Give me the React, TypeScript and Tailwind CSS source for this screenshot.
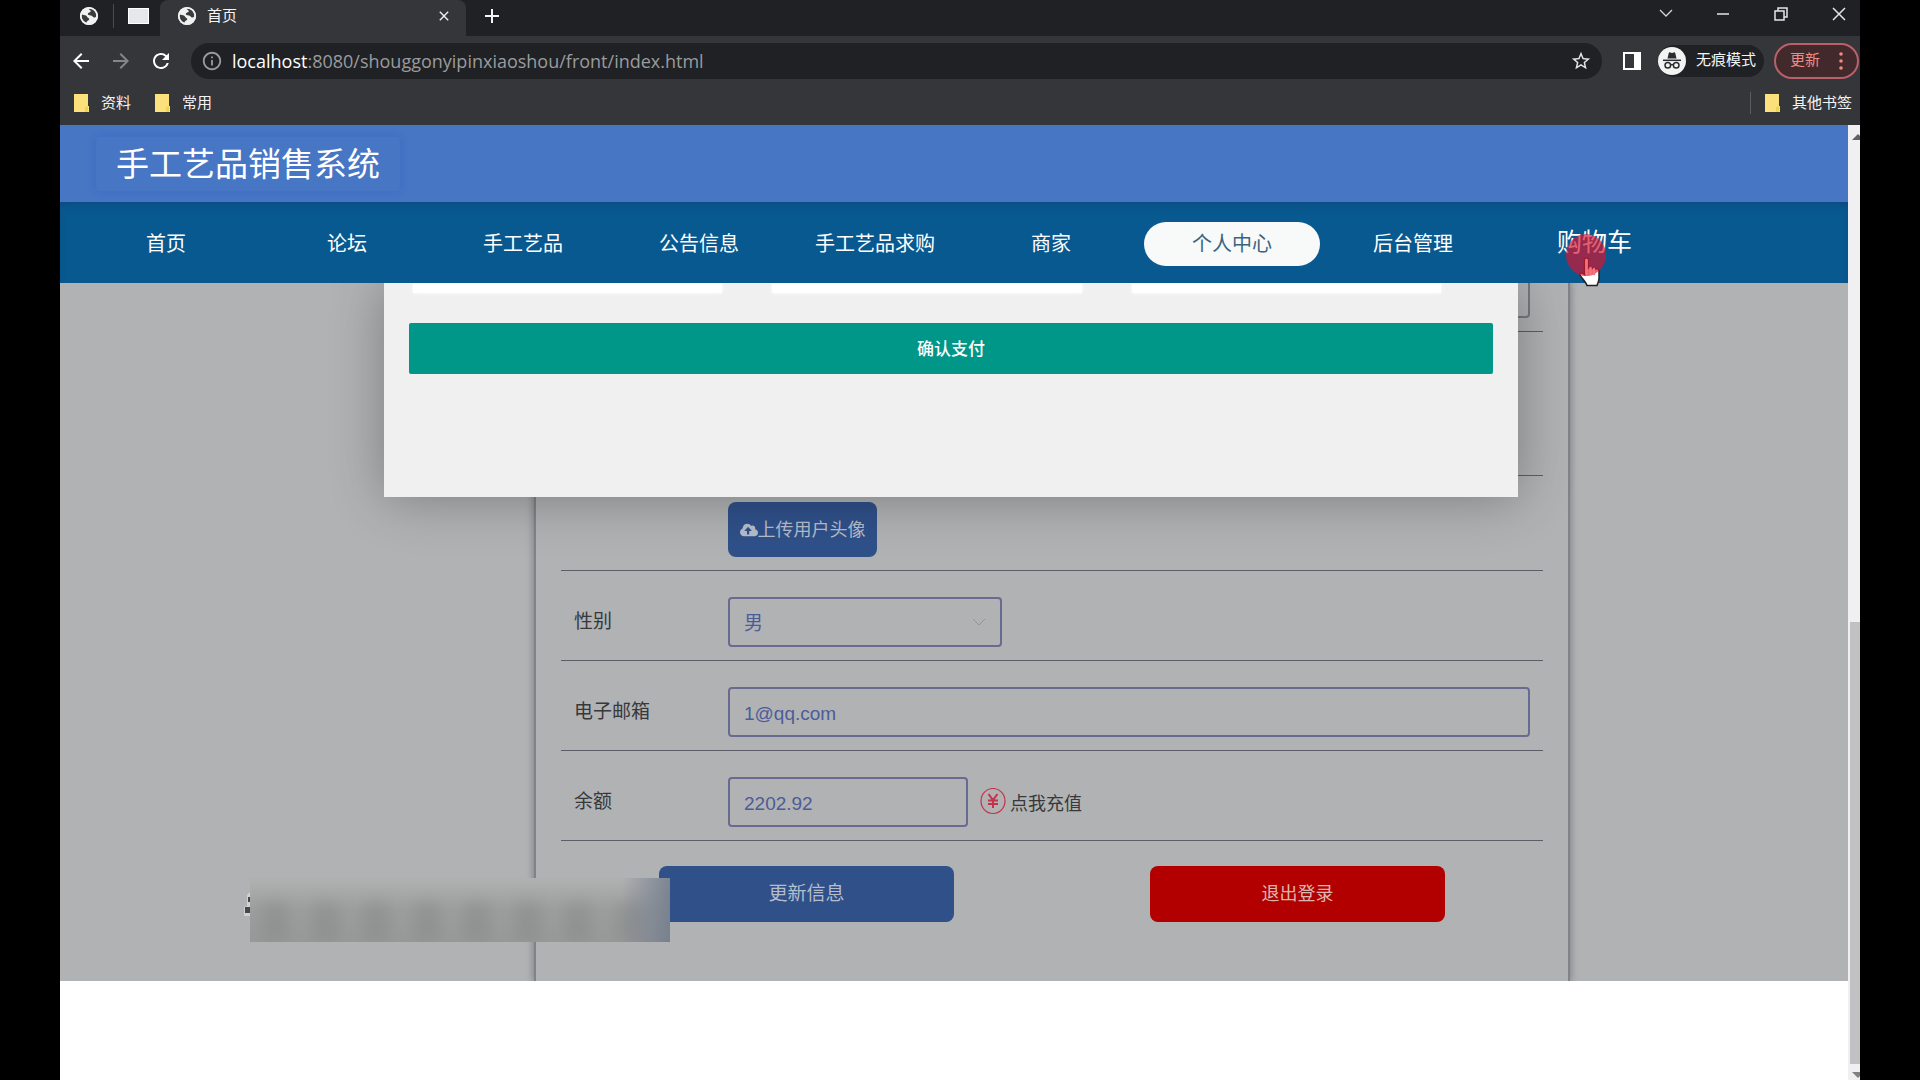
import React, { useState } from 'react';
import { MdArrowBack, MdArrowForward, MdRefresh, MdInfoOutline, MdStarBorder, MdAdd, MdClose } from 'react-icons/md';
import { FaCloudUploadAlt } from 'react-icons/fa';

interface NavItem {
    label: string;
    className?: string;
}

const navItems: NavItem[] = [
    { label: '首页', className: 'mr-[5px]' },
    { label: '论坛' },
    { label: '手工艺品' },
    { label: '公告信息' },
    { label: '手工艺品求购' },
    { label: '商家' },
    { label: '个人中心', className: 'mx-[5px] bg-[#f8fafa] text-[#3b6480]' },
    { label: '后台管理' },
];

const GlobeIcon: React.FC = () => (
    <svg viewBox="0 0 20 20" className="size-5 shrink-0">
        <circle cx="10" cy="10" r="9" fill="#f1f1f1" />
        <path d="M2.500 8c1.200 1.200 3.500.8 4.800 1.800s.7 1.700 2 2.200 1.200 1.500.2 2.200-2 1-2 2.500c-3.500-1.200-5.800-4.700-5-8.700zM9.500 2.500c.3 1.500 2.500 1.300 2.300 2.800s-2.800 1.200-3 2.500 1.500 1.500 3 1.700 1.800 1.300 2.600 1.800 2 .2 3-.8c.3-3.500-1.700-6.500-4.400-7.500-1.200-.5-2.300-.6-3.500-.5z" fill="#3a3b3e" />
        <circle cx="10" cy="10" r="8.200" fill="none" stroke="#f1f1f1" strokeWidth="1.800" />
    </svg>
);

const FolderIcon: React.FC = () => (
    <svg viewBox="0 0 15 18" className="h-[18px] w-[15px] shrink-0">
        <path d="M0 0h14v12h1v6H0z" fill="#fbe07c" />
        <path d="M11 18v-5l3-1v6z" fill="#eed455" />
    </svg>
);

const IncognitoIcon: React.FC = () => (
    <svg viewBox="0 0 28 28" className="size-7 shrink-0">
        <circle cx="14" cy="14" r="14" fill="#f3f3f4" />
        <path d="M9.500 11.500 10.700 6.200c.2-.7.8-1 1.400-.8l1.900.5 1.900-.5c.6-.2 1.200.1 1.400.8l1.200 5.300z" fill="#2b2c2f" />
        <path d="M5 13.300h18" stroke="#2b2c2f" strokeWidth="1.500" />
        <g fill="none" stroke="#2b2c2f" strokeWidth="1.500">
            <circle cx="9.800" cy="18.300" r="2.800" />
            <circle cx="18.200" cy="18.300" r="2.800" />
            <path d="M12.600 18c.9-.7 1.900-.7 2.800 0" />
        </g>
    </svg>
);

const BrowserChrome: React.FC = () => (
    <div className="bg-[#35363a] text-[15px] text-gray-100">
        <div className="flex h-9 bg-[#202124]">
            <div className="flex w-[100px] items-center pb-1 pl-[19px]">
                <GlobeIcon />
                <span className="ml-3.5 h-6 w-px bg-[#4b4c50]" />
                <span className="ml-3.5 h-4 w-[21px] border border-white bg-gray-200" />
            </div>
            <div className="flex w-[306px] items-center rounded-t-lg bg-[#35363a] pr-3.5 pb-1 pl-[17px]">
                <GlobeIcon />
                <span className="ml-2.5 flex-1">首页</span>
                <button aria-label="关闭标签页"><MdClose className="size-4" /></button>
            </div>
            <button className="ml-3.5 pb-1" aria-label="新标签页"><MdAdd className="size-6" /></button>
            <div className="ml-auto flex items-center pr-3.5 pb-2">
                <svg viewBox="0 0 14 14" className="mr-[43px] size-3.5" fill="none" stroke="#d5d5d6" strokeWidth="1.300"><path d="m1 3 6 6 6-6" /></svg>
                <svg viewBox="0 0 14 14" className="mr-[44px] size-3.5" fill="none" stroke="#e5e5e6" strokeWidth="1.500"><path d="M1 7h12" /></svg>
                <svg viewBox="0 0 14 14" className="mr-[44px] size-3.5" fill="none" stroke="#e5e5e6" strokeWidth="1.500"><path d="M1 4h9v9H1zM4 4V1h9v9h-3" /></svg>
                <svg viewBox="0 0 14 14" className="size-3.5" fill="none" stroke="#e5e5e6" strokeWidth="1.500"><path d="m1 1 12 12M13 1 1 13" /></svg>
            </div>
        </div>
        <div className="flex h-[49px] items-center pr-px pl-[9px]">
            <button aria-label="后退"><MdArrowBack className="size-6 text-white" /></button>
            <button className="ml-4" aria-label="前进"><MdArrowForward className="size-6 text-[#85868a]" /></button>
            <button className="ml-4" aria-label="刷新"><MdRefresh className="size-6 text-white" /></button>
            <div className="ml-[18px] flex h-9 flex-1 items-center rounded-full bg-[#202124] pr-2.5 pl-2.5">
                <MdInfoOutline className="size-[22px] text-[#9a9b9e]" />
                <span className="ml-[9px] flex-1 font-['Open_Sans','Noto_Sans',sans-serif] text-lg text-[#9a9b9e]">
                    <span className="text-white">localhost</span>:8080/shouggonyipinxiaoshou/front/index.html
                </span>
                <MdStarBorder className="size-[22px] text-gray-200" />
            </div>
            <span className="ml-[21px] h-[18px] w-[18px] border-2 border-r-[7px] border-white" />
            <div className="ml-[17px] flex h-8 items-center rounded-full bg-[#202124] pr-2">
                <IncognitoIcon />
                <span className="ml-2.5">无痕模式</span>
            </div>
            <button className="ml-2.5 flex h-9 w-[85px] items-center justify-between rounded-full border-2 border-[#b9606a] bg-[#42292c] pr-3.5 pl-3.5 text-[#f08b84]">
                更新
                <svg viewBox="0 0 4 18" className="h-[18px] w-1" fill="#f08b84">
                    <circle cx="2" cy="2" r="1.800" /><circle cx="2" cy="9" r="1.800" /><circle cx="2" cy="16" r="1.800" />
                </svg>
            </button>
        </div>
        <div className="flex h-10 items-center pr-2 pb-1 pl-3.5">
            <FolderIcon />
            <span className="ml-3">资料</span>
            <span className="w-6" />
            <FolderIcon />
            <span className="ml-3">常用</span>
            <span className="mr-3.5 ml-auto h-[22px] w-px bg-[#5c5d61]" />
            <FolderIcon />
            <span className="ml-3">其他书签</span>
        </div>
    </div>
);

const Scrollbar: React.FC = () => (
    <div className="flex w-3 flex-col overflow-hidden bg-[#f0f0f2] pl-0.5">
        <svg viewBox="0 0 12 16" className="h-[18px] w-3"><path d="M2 14 8 8l6 6z" fill="#606164" /></svg>
        <div className="mt-[479px] flex-1 bg-[#c1c1c3]" />
        <svg viewBox="0 0 12 16" className="h-4 w-3"><path d="M2 8h12l-6 6z" fill="#808184" /></svg>
    </div>
);

const PointerCursor: React.FC = () => (
    <svg viewBox="0 0 44 54" className="pointer-events-none absolute top-[9px] left-[7px] h-[54px] w-11">
        <path d="M20.500 26c0-2.800 3.800-2.800 3.800 0v8c1-1 3.200-1 3.700.5 1-1 3-1 3.500.6 1.500-.8 3.500-.3 3.500 2v7c0 3-1 4-2 7.400H23c-1-3.500-5-7-7-10.500-.8-2 1.500-3.200 4.500-.5z" fill="#fff" stroke="#222" strokeWidth="1.500" />
        <ellipse cx="22" cy="21" rx="20" ry="21" fill="#d8152f" fillOpacity=".68" />
        <path d="M22.500 26v14M26.500 34v6M30 35v5" stroke="#f4747c" strokeWidth="2.500" strokeLinecap="round" />
    </svg>
);

const Header: React.FC = () => (
    <header className="relative z-20">
        <div className="flex h-[77px] items-center bg-[#4776c5] pl-9">
            <h1 className="flex h-[54px] items-center rounded-sm px-5 pt-0.5 text-[33px] text-white shadow-[0_0_6px_2px_rgba(50,90,190,0.3)]">手工艺品销售系统</h1>
        </div>
        <nav className="flex h-[81px] items-center bg-[#08598f] pt-0.5 pl-[18px] text-xl text-white shadow-[inset_0_6px_8px_-4px_rgba(20,60,120,0.6)]">
            {navItems.map((item) => (
                <a
                    key={item.label}
                    href="#"
                    className={`flex h-11 w-44 items-center justify-center rounded-full ${item.className ?? ''}`}
                >
                    {item.label}
                </a>
            ))}
            <a href="#" className="relative ml-14 pb-0.5 text-[25px]">
                购物车
                <PointerCursor />
            </a>
        </nav>
    </header>
);

interface FormRowProps {
    label?: string;
    htmlFor?: string;
    children?: React.ReactNode;
}

const FormRow: React.FC<FormRowProps> = ({ label, htmlFor, children }) => (
    <div className="flex items-center border-b border-[#5c5d66] pt-[26px] pr-[13px] pb-[13px] pl-[13px]">
        <label htmlFor={htmlFor} className="w-[154px] shrink-0 text-[19px] text-[#37383b]">{label}</label>
        {children}
    </div>
);

const fieldClass = 'h-[50px] rounded border-2 border-[#696a90] bg-transparent px-3.5 pt-1 text-[19px] text-[#4c5c98] outline-none';

const UserForm: React.FC = () => {
    const [gender, setGender] = useState('男');
    const [email, setEmail] = useState('1@qq.com');
    const [balance, setBalance] = useState('2202.92');

    return (
        <form className="mr-[278px] ml-[474px] border-x-2 border-[#828388] px-[25px] pb-[59px] shadow-[0_0_7px_1px_rgba(70,70,75,0.45)]">
            <div className="flex h-[49px] items-end overflow-hidden border-b border-[#5c5d66] pr-[13px] pb-[13px] pl-[167px]">
                <input aria-label="手机" className="h-[50px] w-full rounded border-2 border-[#78797d]" />
            </div>
            <div className="h-36 border-b border-[#5c5d66]" />
            <FormRow>
                <button type="button" className="flex h-[55px] w-[149px] items-center justify-center rounded-lg bg-[#2f5089] text-lg text-[#b5bdcc]">
                    <FaCloudUploadAlt className="size-[18px]" />上传用户头像
                </button>
            </FormRow>
            <FormRow label="性别" htmlFor="gender">
                <div className="relative">
                    <select id="gender" value={gender} onChange={(e) => setGender(e.target.value)} className={`${fieldClass} w-[274px] appearance-none`}>
                        <option>男</option>
                        <option>女</option>
                    </select>
                    <svg viewBox="0 0 14 8" className="pointer-events-none absolute top-[21px] right-4 h-2 w-3.5" fill="none" stroke="#929398"><path d="m1 1 6 6 6-6" /></svg>
                </div>
            </FormRow>
            <FormRow label="电子邮箱" htmlFor="email">
                <input id="email" value={email} onChange={(e) => setEmail(e.target.value)} className={`${fieldClass} min-w-0 flex-1`} />
            </FormRow>
            <FormRow label="余额" htmlFor="balance">
                <input id="balance" value={balance} onChange={(e) => setBalance(e.target.value)} className={`${fieldClass} w-60`} />
                <button type="button" className="ml-3 flex items-center gap-1 text-lg text-[#37383b]">
                    <svg viewBox="0 0 26 28" className="h-7 w-[26px]" fill="none" stroke="#c8304a">
                        <ellipse cx="13" cy="13" rx="12" ry="12.500" strokeWidth="1.200" />
                        <path d="m8.500 6 4.500 6 4.500-6M13 12v8M8 12.500h10M8 16h10" strokeWidth="2" />
                    </svg>
                    <span className="pt-1">点我充值</span>
                </button>
            </FormRow>
            <div className="grid grid-cols-2 justify-items-center pt-[25px]">
                <button type="button" className="h-14 w-3/5 rounded-lg bg-[#2f5089] text-[19px] text-[#b5bdcc]">更新信息</button>
                <button type="button" className="h-14 w-3/5 rounded-lg bg-[#b20000] text-lg text-[#dcb6ae]">退出登录</button>
            </div>
        </form>
    );
};

const PayDialog: React.FC = () => (
    <div role="dialog" className="absolute top-0 right-[330px] left-[324px] z-10 h-[214px] bg-[#f0f0f1] px-[25px] shadow-[1px_1px_50px_rgba(0,0,0,0.3)]">
        <div className="grid grid-cols-3 gap-[50px] pr-[52px] pl-1">
            <div className="h-2.5 bg-white shadow-[0_0_4px_#fff]" />
            <div className="h-2.5 bg-white shadow-[0_0_4px_#fff]" />
            <div className="h-2.5 bg-white shadow-[0_0_4px_#fff]" />
        </div>
        <button className="mt-[30px] h-[51px] w-full rounded-xs bg-[#009688] pt-0.5 text-[17px] font-medium text-white">确认支付</button>
    </div>
);

// Frosted strip that hides the caption
const CaptionMask: React.FC = () => (
    <div className="absolute bottom-[39px] left-[184px] z-10 flex">
        <svg viewBox="0 0 6 64" className="h-16 w-1.5">
            <path d="M6 14v24H0v-9l3-1V17z" fill="#d0d1d1" />
            <path d="M4 19h2v5H4zM1 29h5v6H1z" fill="#47484a" />
        </svg>
        <div className="relative h-16 w-[420px] overflow-hidden bg-linear-to-b from-[#b0b1b1] via-[#9d9f9f] to-[#989a9a]">
            <div className="absolute inset-x-0 top-6 flex justify-around pr-4">
                {[0, 1, 2, 3, 4, 5, 6, 7].map((i) => (
                    <span key={i} className="h-10 w-7 bg-[#818383] opacity-40 blur-[8px]" />
                ))}
            </div>
            <div className="absolute inset-y-0 right-0 w-12 bg-linear-to-r from-transparent to-[#6f7a8c]/80" />
        </div>
    </div>
);

const App: React.FC = () => {
    return (
        <div className="flex min-h-screen bg-black px-[60px] font-['Liberation_Sans','Noto_Sans_CJK_SC',sans-serif]">
            <div className="flex min-w-0 flex-1 flex-col overflow-hidden">
                <BrowserChrome />
                <div className="flex flex-1">
                    <div className="min-w-0 flex-1 bg-white">
                        <Header />
                        <main className="relative overflow-hidden bg-[#b1b2b4]">
                            <UserForm />
                            <PayDialog />
                            <CaptionMask />
                        </main>
                    </div>
                    <Scrollbar />
                </div>
            </div>
        </div>
    );
};

export default App;
